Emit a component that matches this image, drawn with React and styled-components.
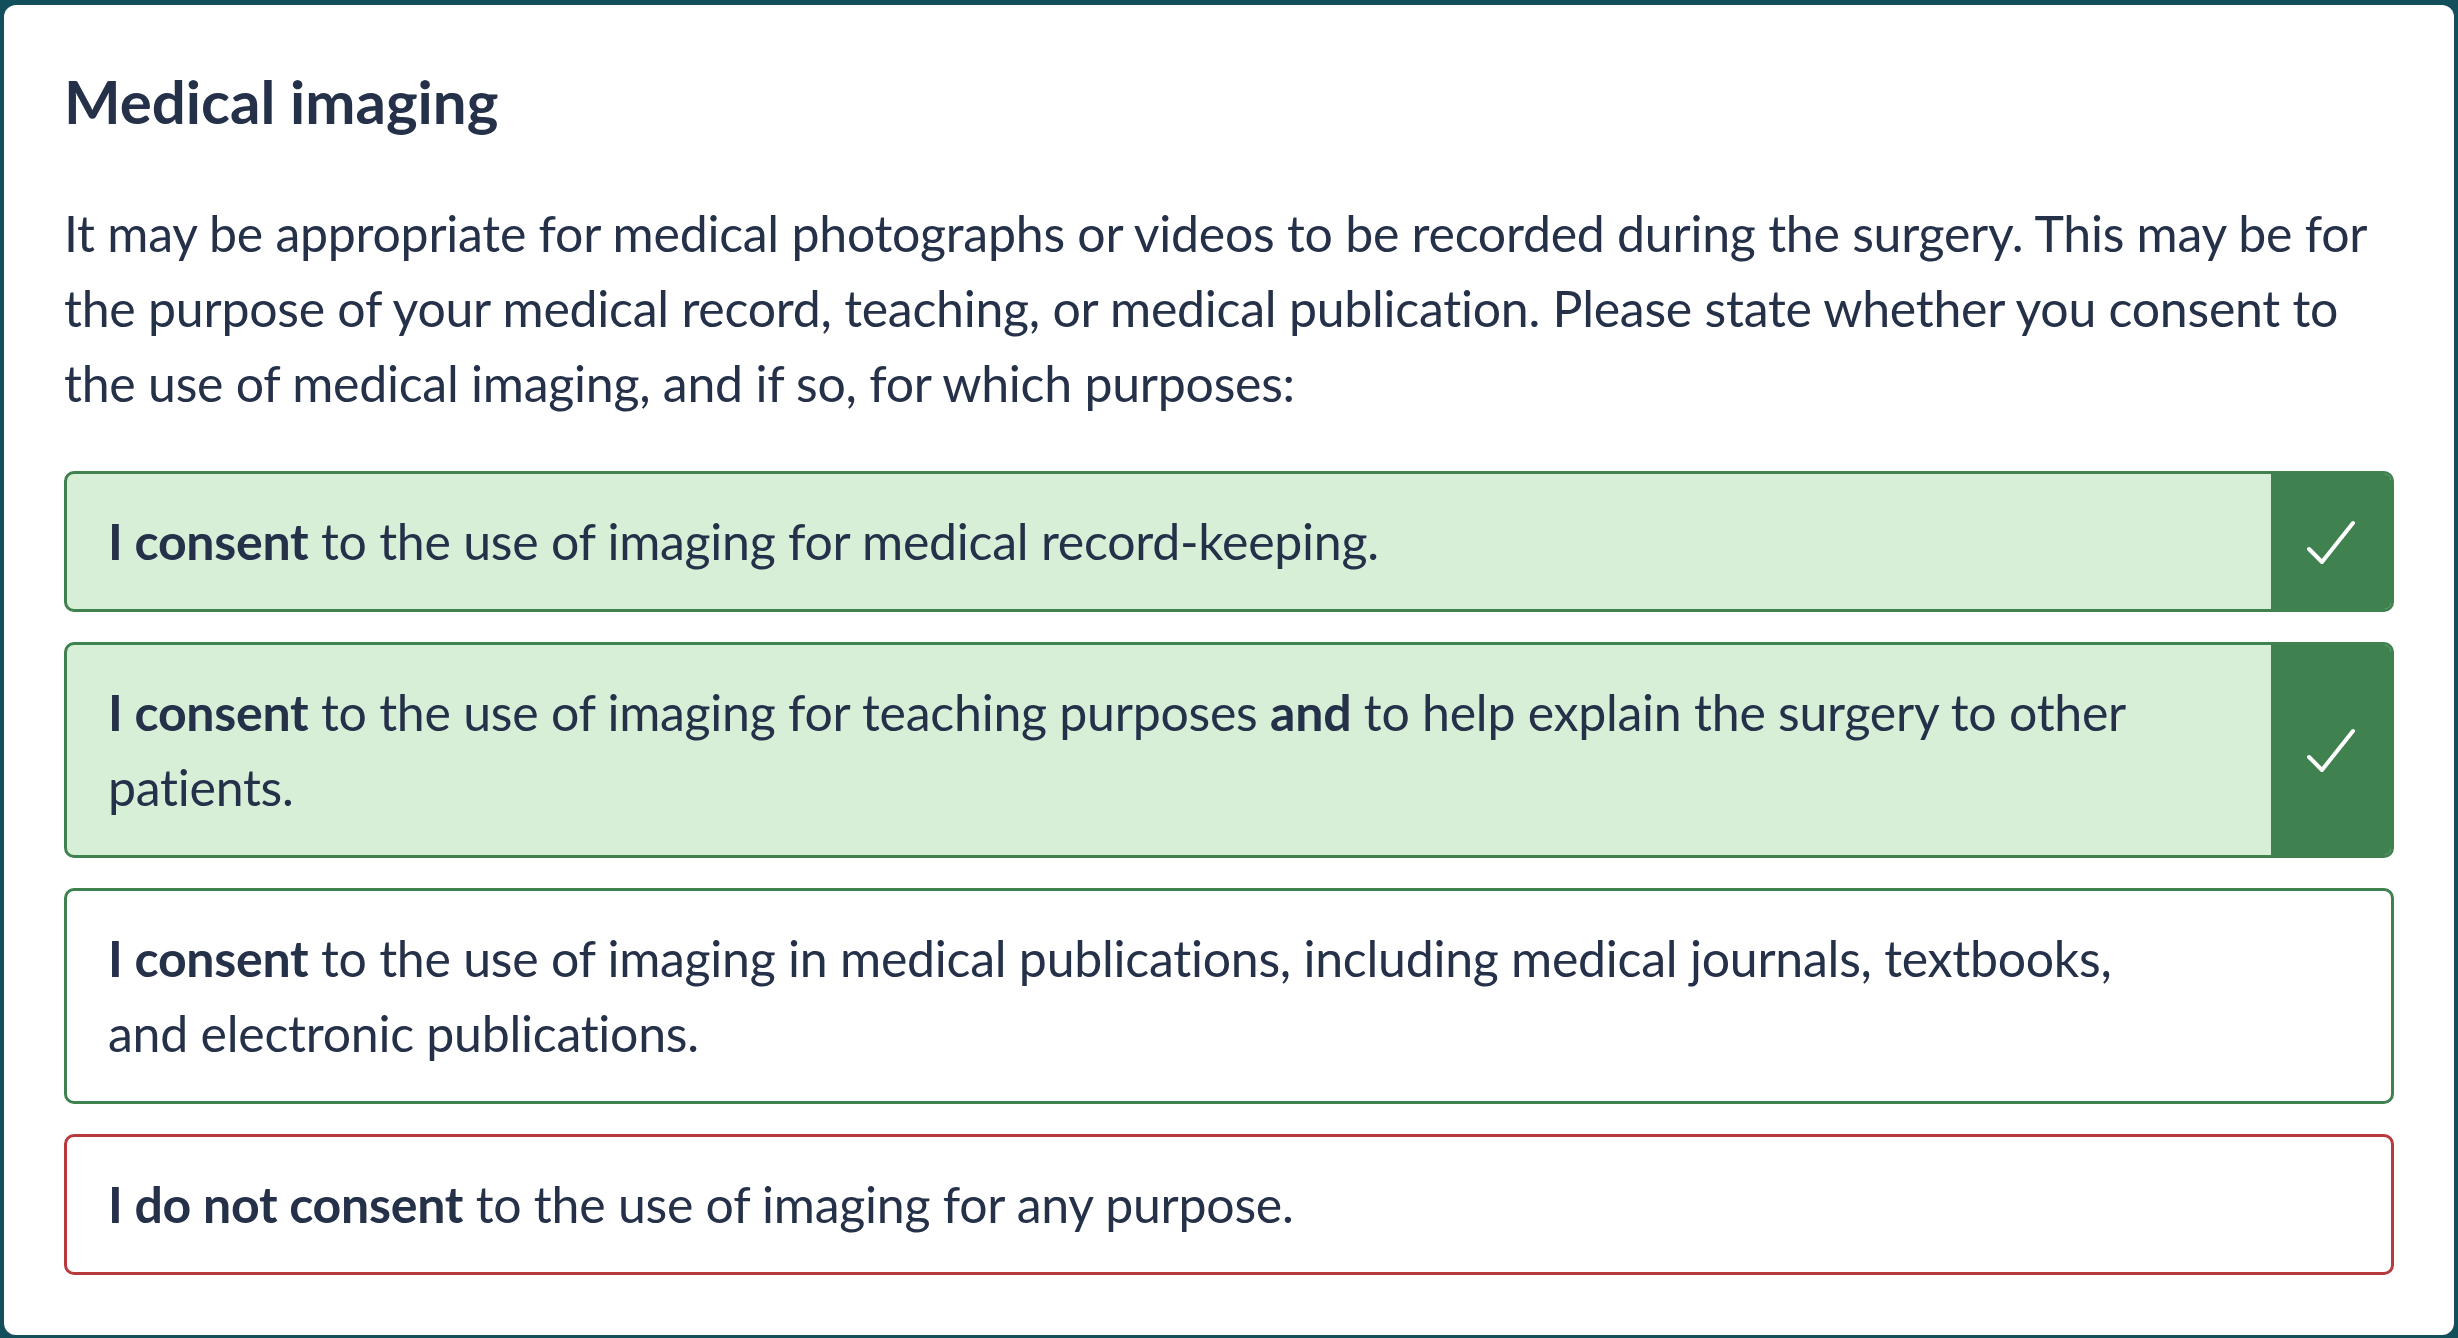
import React from "react";
import styled, { createGlobalStyle } from "styled-components";

const GlobalStyle = createGlobalStyle`
  html, body {
    margin: 0;
    padding: 0;
    background: #134f5b;
  }
  body {
    font-family: Lato, "Noto Sans", sans-serif;
    font-variant-ligatures: none;
    color: #253049;
  }
`;

const options = [
  {
    id: "record",
    lead: "I consent",
    rest: [" to the use of imaging for medical record-keeping."],
    checked: true,
  },
  {
    id: "teaching",
    lead: "I consent",
    rest: [
      " to the use of imaging for teaching purposes ",
      <b key="and">and</b>,
      " to help explain the surgery to other patients.",
    ],
    checked: true,
  },
  {
    id: "publication",
    lead: "I consent",
    rest: [
      " to the use of imaging in medical publications, including medical journals, textbooks, and electronic publications.",
    ],
    checked: false,
  },
  {
    id: "none",
    lead: "I do not consent",
    rest: [" to the use of imaging for any purpose."],
    checked: false,
    negative: true,
  },
];

function CheckIcon() {
  return (
    <svg width="48" height="48" viewBox="0 0 48 48">
      <polyline
        points="2 31 15 44 46 5"
        fill="none"
        stroke="#fff"
        strokeWidth="4"
        strokeLinecap="round"
        strokeLinejoin="round"
      />
    </svg>
  );
}

function ConsentOption({ option }) {
  return (
    <Option checked={option.checked} negative={option.negative}>
      <OptionText>
        <b>{option.lead}</b>
        {option.rest}
      </OptionText>
      <CheckColumn checked={option.checked}>
        {option.checked && <CheckIcon />}
      </CheckColumn>
    </Option>
  );
}

export default function App() {
  return (
    <>
      <GlobalStyle />
      <Card>
        <Title>Medical imaging</Title>
        <Intro>
          It may be appropriate for medical photographs or videos to be recorded
          during the surgery. This may be for the purpose of your medical record,
          teaching, or medical publication. Please state whether you consent to
          the use of medical imaging, and if so, for which purposes:
        </Intro>
        <OptionList>
          {options.map((o) => (
            <ConsentOption key={o.id} option={o} />
          ))}
        </OptionList>
      </Card>
    </>
  );
}

const Card = styled.div`
  margin: 5px 4px 0 4px;
  padding: 60px;
  background: #fff;
  border-radius: 12px;
`;

const Title = styled.h2`
  margin: 0;
  font-size: 60px;
  line-height: 1.2;
  font-weight: 700;
  color: #253049;
`;

const Intro = styled.p`
  margin: 59px 0 50px 0;
  font-size: 50px;
  line-height: 75px;
  letter-spacing: -0.25px;
`;

const OptionList = styled.div`
  display: flex;
  flex-direction: column;
  gap: 30px;
`;

const Option = styled.div`
  display: flex;
  align-items: stretch;
  border: 3px solid ${(p) => (p.negative ? "#b73a3c" : "#408150")};
  border-radius: 10px;
  background: ${(p) => (p.checked ? "#d7eed7" : "#fff")};
  overflow: hidden;
`;

const OptionText = styled.div`
  flex: 1;
  padding: 30px 110px 30px 41px;
  font-size: 50px;
  line-height: 75px;
  letter-spacing: -0.25px;

  b {
    font-weight: 700;
  }
`;

const CheckColumn = styled.div`
  flex: 0 0 120px;
  display: flex;
  align-items: center;
  justify-content: center;
  background: ${(p) => (p.checked ? "#408150" : "transparent")};
`;
